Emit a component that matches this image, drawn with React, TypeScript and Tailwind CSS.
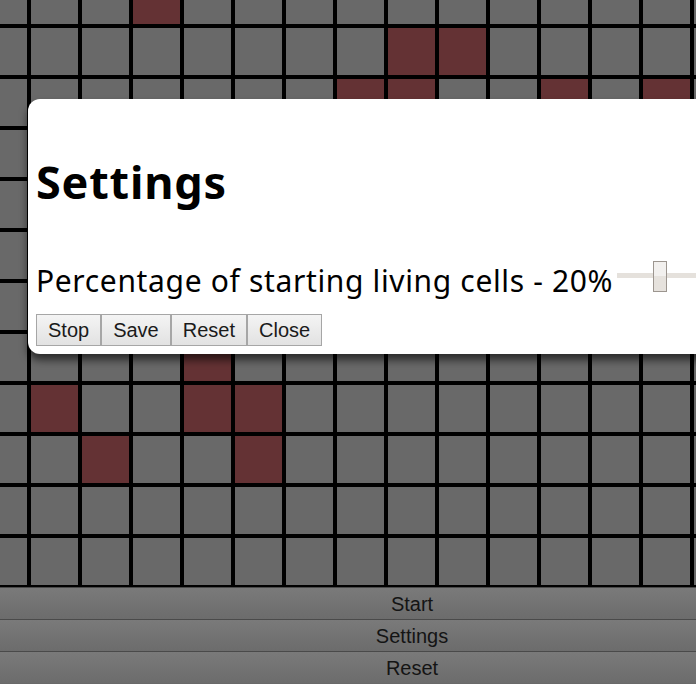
import React, { useState } from 'react';

const ROWS = 12;
const COLS = 17;

// cells that are alive in this frame, as "row-col"
const alive = new Set([
  '0-3', '1-8', '1-9', '2-7', '2-8', '2-11', '2-13',
  '4-6', '5-9', '5-10', '6-12',
  '7-4', '8-1', '8-4', '8-5', '9-2', '9-5',
]);

const Cell: React.FC<{ live: boolean }> = ({ live }) => (
  <div className={`h-[51px] w-[51px] border-2 border-black ${live ? 'bg-[#643234]' : 'bg-[#696969]'}`} />
);

const BarButton: React.FC<{ label: string }> = ({ label }) => (
  <button className="h-[32px] w-full border-t border-[#4a4a4a] bg-gradient-to-b from-[#7a7a7a] to-[#6c6c6c] text-[20px] leading-[30px] text-[#141414] font-['Liberation_Sans',Arial,sans-serif]">
    {label}
  </button>
);

const SettingsButton: React.FC<{ label: string }> = ({ label }) => (
  <button className="h-[32px] border border-[#a6a6a6] bg-gradient-to-b from-[#f4f4f4] to-[#e2e2e2] px-[11px] text-[20px] leading-[30px] text-[#1a1a1a] font-['Liberation_Sans',Arial,sans-serif]">
    {label}
  </button>
);

const App = () => {
  const [percent] = useState(20);

  return (
    <div className="relative h-[684px] w-[696px] overflow-hidden bg-[#696969]">
      <div className="-ml-[22px] -mt-[25px] w-[868px]">
        <div className="grid grid-cols-[repeat(17,51px)]">
          {Array.from({ length: ROWS * COLS }).map((_, i) => {
            const r = Math.floor(i / COLS);
            const c = i % COLS;
            return <Cell key={i} live={alive.has(`${r}-${c}`)} />;
          })}
        </div>
        <div className="flex flex-col">
          <BarButton label="Start" />
          <BarButton label="Settings" />
          <BarButton label="Reset" />
        </div>
      </div>

      {/* settings modal */}
      <div className="absolute left-[28px] top-[99px] w-[800px] rounded-[12px] bg-white px-[8px] pb-[8px] pt-[53px] shadow-[0_6px_8px_rgba(0,0,0,0.6)] font-['Noto_Sans',sans-serif] text-black">
        <h1 className="text-[45px] font-bold leading-[60px] tracking-[0.8px]">Settings</h1>
        <div className="mt-[49px] flex items-start">
          <span className="text-[30px] leading-[40px] tracking-[0.65px]">
            Percentage of starting living cells - {percent}%
          </span>
          <div className="relative ml-[4px] h-[31px] w-[200px]">
            <div className="absolute left-0 right-0 top-[12px] h-[5px] bg-[#e5e1dc]" />
            <div className="absolute left-[36px] top-0 h-[31px] w-[14px] border border-[#9c958f] bg-gradient-to-b from-[#f2f0ee] from-50% to-[#e6e2dd] to-50%" />
          </div>
        </div>
        <div className="mt-[13px] flex">
          <SettingsButton label="Stop" />
          <SettingsButton label="Save" />
          <SettingsButton label="Reset" />
          <SettingsButton label="Close" />
        </div>
      </div>
    </div>
  );
};

export default App;
